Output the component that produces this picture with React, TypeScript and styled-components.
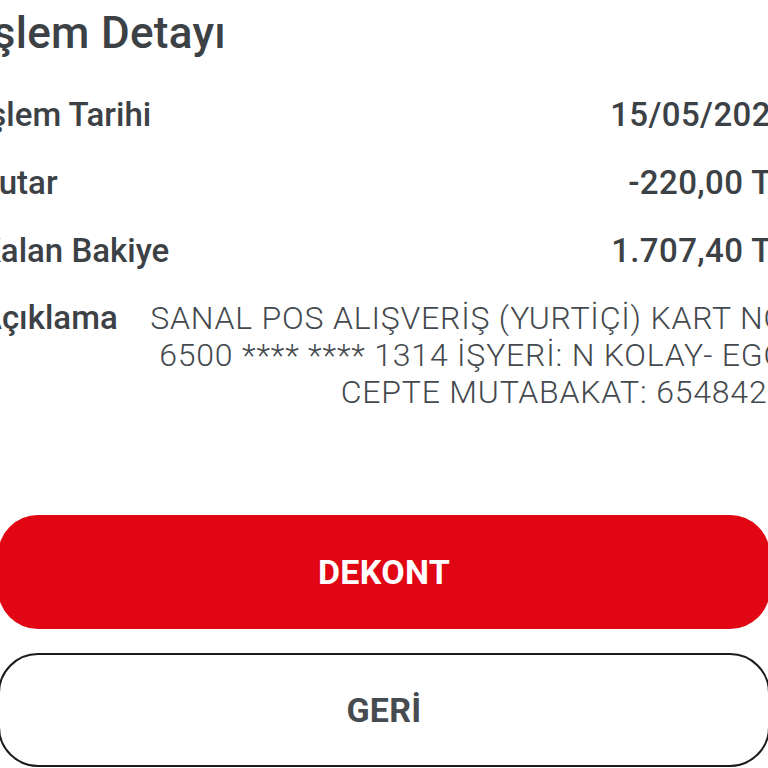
import { createGlobalStyle, styled } from "styled-components";

const GlobalStyle = createGlobalStyle`
  html, body {
    margin: 0;
    padding: 0;
    background: #ffffff;
    overflow: hidden;
  }
  body {
    font-family: Roboto, "Noto Sans", sans-serif;
    color: #3c4146;
  }
`;

const rows = [
  { label: "İşlem Tarihi", value: "15/05/2024" },
  { label: "Tutar", value: "-220,00 TL" },
  { label: "Kalan Bakiye", value: "1.707,40 TL" },
];

const description = [
  "SANAL POS ALIŞVERİŞ (YURTİÇİ) KART NO",
  "6500 **** **** 1314 İŞYERİ: N KOLAY- EGO",
  "CEPTE MUTABAKAT: 6548421",
];

const App = () => {
  return (
    <>
      <GlobalStyle />
      <Page>
        <Title>İşlem Detayı</Title>
        <Details>
          {rows.map((row) => (
            <Row key={row.label}>
              <Label>{row.label}</Label>
              <Value>{row.value}</Value>
            </Row>
          ))}
          <DescRow>
            <Label>Açıklama</Label>
            <DescText>
              {description.map((line) => (
                <span key={line}>{line}</span>
              ))}
            </DescText>
          </DescRow>
        </Details>
        <Actions>
          <Button $variant='primary'>DEKONT</Button>
          <Button $variant='outline'>GERİ</Button>
        </Actions>
      </Page>
    </>
  );
};

const Page = styled.div`
  width: 810px;
  margin-left: -20px;
  padding-top: 4px;
  display: flex;
  flex-direction: column;
`;

const Title = styled.h1`
  margin: 0;
  font-size: 44px;
  line-height: 58px;
  font-weight: 500;
  letter-spacing: 0.3px;
`;

const Details = styled.div`
  display: flex;
  flex-direction: column;
  margin-top: 33px;
`;

const Row = styled.div`
  display: flex;
  justify-content: space-between;
  align-items: baseline;
  height: 68px;
  line-height: 40px;
`;

const Label = styled.span`
  font-size: 33px;
  font-weight: 500;
  white-space: nowrap;
`;

const Value = styled.span`
  font-size: 33px;
  font-weight: 500;
  letter-spacing: 0.4px;
  white-space: nowrap;
`;

const DescRow = styled.div`
  display: flex;
  justify-content: space-between;
  align-items: baseline;
  gap: 12px;
  line-height: 37px;
`;

const DescText = styled.div`
  display: flex;
  flex-direction: column;
  align-items: flex-end;
  margin-right: 4px;
  font-size: 32px;
  font-weight: 300;
  letter-spacing: 0.8px;
  white-space: nowrap;
  color: #44494e;
`;

const Actions = styled.div`
  display: flex;
  flex-direction: column;
  gap: 24px;
  margin-top: 104px;
  padding-left: 18px;
`;

const Button = styled.button<{ $variant: "primary" | "outline" }>`
  width: 772px;
  height: 114px;
  border-radius: 40px;
  font-family: Roboto, "Noto Sans", sans-serif;
  font-size: 34px;
  font-weight: 700;
  letter-spacing: 0.3px;
  cursor: pointer;
  background: ${({ $variant }) => ($variant === "primary" ? "#e00613" : "#ffffff")};
  color: ${({ $variant }) => ($variant === "primary" ? "#ffffff" : "#464b50")};
  border: ${({ $variant }) =>
    $variant === "primary" ? "none" : "2px solid #1b1b1b"};
`;

export default App;
